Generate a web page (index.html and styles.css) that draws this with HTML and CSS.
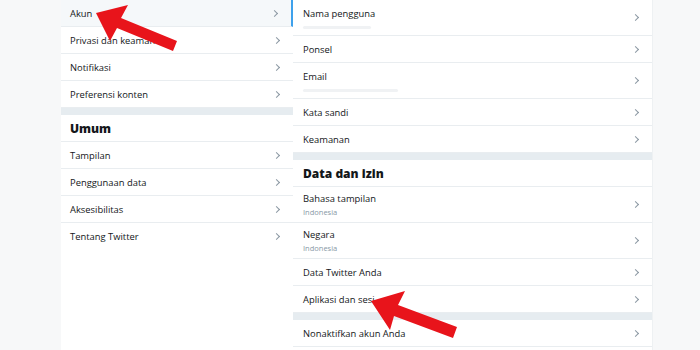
FILE: index.html
```html
<!doctype html>
<html>
  <head>
    <title>Pengaturan</title>
    <meta name="viewport" content="width=device-width, initial-scale=1">
    <link rel="stylesheet" href="styles.css">
  </head>
  <body>
    <div class="page">
      <nav class="menu">
        <a class="row active"><span>Akun</span><i class="chev"></i></a>
        <a class="row"><span>Privasi dan keamanan</span><i class="chev"></i></a>
        <a class="row"><span>Notifikasi</span><i class="chev"></i></a>
        <a class="row"><span>Preferensi konten</span><i class="chev"></i></a>
        <div class="band"></div>
        <h2 class="head">Umum</h2>
        <a class="row"><span>Tampilan</span><i class="chev"></i></a>
        <a class="row"><span>Penggunaan data</span><i class="chev"></i></a>
        <a class="row"><span>Aksesibilitas</span><i class="chev"></i></a>
        <a class="row last"><span>Tentang Twitter</span><i class="chev"></i></a>
      </nav>
      <main class="detail">
        <a class="row tall"><span class="txt">Nama pengguna<small class="blur w1"></small></span><i class="chev"></i></a>
        <a class="row"><span>Ponsel</span><i class="chev"></i></a>
        <a class="row tall"><span class="txt">Email<small class="blur w2"></small></span><i class="chev"></i></a>
        <a class="row"><span>Kata sandi</span><i class="chev"></i></a>
        <a class="row"><span>Keamanan</span><i class="chev"></i></a>
        <div class="band"></div>
        <h2 class="head">Data dan izin</h2>
        <a class="row tall"><span class="txt">Bahasa tampilan<small>Indonesia</small></span><i class="chev"></i></a>
        <a class="row tall"><span class="txt">Negara<small>Indonesia</small></span><i class="chev"></i></a>
        <a class="row"><span>Data Twitter Anda</span><i class="chev"></i></a>
        <a class="row"><span>Aplikasi dan sesi</span><i class="chev"></i></a>
        <div class="band"></div>
        <a class="row"><span>Nonaktifkan akun Anda</span><i class="chev"></i></a>
      </main>
    </div>
    <svg class="arrows" width="700" height="350" viewBox="0 0 700 350">
      <polygon points="96,13 128,5 121,18 177,41 173,51 117,28 110,41" fill="#e8141b"/>
      <polygon points="371,301 405,291 398,305 457,327 453,338 394,316 390,330" fill="#e8141b"/>
    </svg>
  </body>
</html>
```
FILE: styles.css
```css
html {
  box-sizing: border-box;
}
*, *::before, *::after {
  box-sizing: inherit;
}
body {
  margin: 0;
  background: #f7f8f9;
  font-family: "Open Sans", "Noto Sans", sans-serif;
  color: #14171a;
  overflow: hidden;
}
.page {
  display: flex;
  padding-left: 61px;
  height: 350px;
}
.menu {
  width: 232px;
  background: #fff;
  display: flex;
  flex-direction: column;
}
.detail {
  width: 360px;
  background: #fff;
  display: flex;
  flex-direction: column;
  border-right: 1px solid #eef1f3;
}
.row {
  display: flex;
  align-items: center;
  justify-content: space-between;
  height: 27px;
  padding: 0 14px 0 9px;
  border-bottom: 1px solid #e9edf0;
  font-size: 9.4px;
  cursor: pointer;
}
.detail .row {
  padding: 0 14px 0 10px;
}
.row.last {
  border-bottom: none;
}
.row.tall {
  height: 36px;
}
.active {
  background: #f5f8fa;
  border-right: 2px solid #3ea1ec;
}
.txt {
  display: flex;
  flex-direction: column;
  gap: 2px;
}
small {
  font-size: 7.5px;
  color: #8899a6;
  line-height: 10px;
}
.blur {
  height: 3px;
  margin-top: 4px;
  background: #f0f2f4;
  border-radius: 2px;
}
.w1 { width: 68px; }
.w2 { width: 95px; }
.chev {
  width: 5px;
  height: 5px;
  border-top: 1px solid #8a97a2;
  border-right: 1px solid #8a97a2;
  transform: rotate(45deg);
}
.band {
  height: 7px;
  background: #e6ecf0;
}
.head {
  margin: 0;
  height: 27px;
  display: flex;
  align-items: center;
  padding-left: 9px;
  font-size: 12px;
  font-weight: 800;
  border-bottom: 1px solid #e9edf0;
}
.detail .head {
  padding-left: 10px;
}
.arrows {
  position: absolute;
  top: 0;
  left: 0;
}
```
